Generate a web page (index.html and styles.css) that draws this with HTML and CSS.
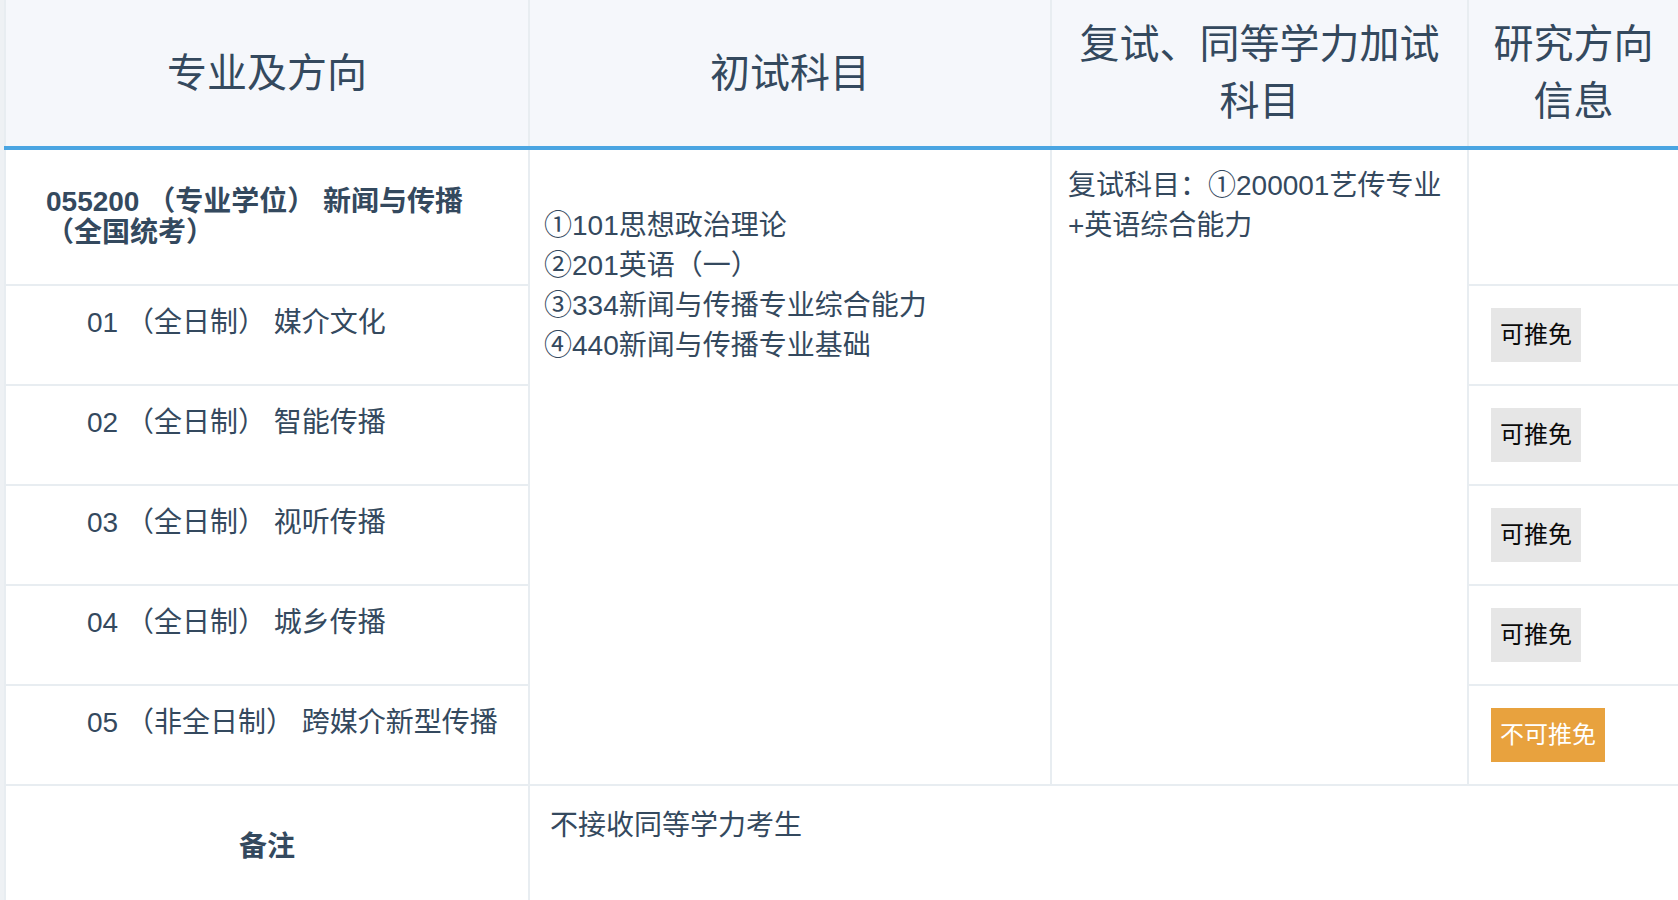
FILE: index.html
```html
<!DOCTYPE html>
<html lang="zh-CN">
<head>
<meta charset="utf-8">
<title>招生专业目录</title>
<link rel="stylesheet" href="styles.css">
</head>
<body>
<div class="page">
  <table class="plan">
    <colgroup>
      <col class="c1">
      <col class="c2">
      <col class="c3">
      <col class="c4">
    </colgroup>
    <thead>
      <tr>
        <th>专业及方向</th>
        <th>初试科目</th>
        <th>复试、同等学力加试科目</th>
        <th>研究方向信息</th>
      </tr>
    </thead>
    <tbody>
      <tr class="row-major">
        <td class="major">055200 （专业学位） 新闻与传播<br>（全国统考）</td>
        <td class="exam" rowspan="6">①101思想政治理论<br>②201英语（一）<br>③334新闻与传播专业综合能力<br>④440新闻与传播专业基础</td>
        <td class="retest" rowspan="6">复试科目：①200001艺传专业<br>+英语综合能力</td>
        <td class="info"></td>
      </tr>
      <tr class="row-dir">
        <td class="dir">01 （全日制） 媒介文化</td>
        <td class="info"><span class="tag">可推免</span></td>
      </tr>
      <tr class="row-dir">
        <td class="dir">02 （全日制） 智能传播</td>
        <td class="info"><span class="tag">可推免</span></td>
      </tr>
      <tr class="row-dir">
        <td class="dir">03 （全日制） 视听传播</td>
        <td class="info"><span class="tag">可推免</span></td>
      </tr>
      <tr class="row-dir">
        <td class="dir">04 （全日制） 城乡传播</td>
        <td class="info"><span class="tag">可推免</span></td>
      </tr>
      <tr class="row-dir">
        <td class="dir">05 （非全日制） 跨媒介新型传播</td>
        <td class="info"><span class="tag tag-no">不可推免</span></td>
      </tr>
      <tr class="row-note">
        <td class="note-label">备注</td>
        <td class="note" colspan="3">不接收同等学力考生</td>
      </tr>
    </tbody>
  </table>
</div>
</body>
</html>
```

FILE: styles.css
```css
html, body {
  margin: 0;
  padding: 0;
}

body {
  background: #eef1f4;
  font-family: "Liberation Sans", "Noto Sans CJK SC", sans-serif;
  color: #34495e;
}

.page {
  padding-left: 4px;
}

.plan {
  width: 1674px;
  table-layout: fixed;
  border-collapse: collapse;
  background: #ffffff;
  font-size: 28px;
  line-height: 40px;
}

.c1 { width: 524px; }
.c2 { width: 522px; }
.c3 { width: 417px; }
.c4 { width: 211px; }

.plan th {
  height: 146px;
  box-sizing: border-box;
  padding: 16px;
  background: #f5f7fb;
  font-size: 40px;
  line-height: 57px;
  font-weight: normal;
  text-align: center;
  vertical-align: middle;
  border: 2px solid #e8edf1;
  border-top: none;
  border-bottom: 4px solid #4aa5e2;
}

.plan td {
  padding: 16px;
  vertical-align: top;
  border: 2px solid #e8edf1;
  text-align: left;
}

.row-major {
  height: 137px;
}

.row-dir {
  height: 98px;
}

.row-note {
  height: 124px;
}

.major {
  font-weight: bold;
  line-height: 31px;
  vertical-align: middle !important;
  padding-left: 40px !important;
  padding-right: 20px !important;
}

.dir {
  padding-top: 17px !important;
  padding-left: 81px !important;
}

.exam {
  padding-top: 56px !important;
  padding-left: 14px !important;
}

.info {
  padding: 15px 16px 15px 22px !important;
}

.tag {
  display: inline-block;
  margin: 7px 0;
  padding: 10px 9px;
  font-size: 24px;
  line-height: 34px;
  background: #e6e6e6;
  color: #0a0a0a;
  vertical-align: top;
}

.tag-no {
  background: #e8a23e;
  color: #ffffff;
}

.note-label {
  font-weight: bold;
  text-align: center !important;
  vertical-align: middle !important;
}

.note {
  padding: 20px !important;
}
```
